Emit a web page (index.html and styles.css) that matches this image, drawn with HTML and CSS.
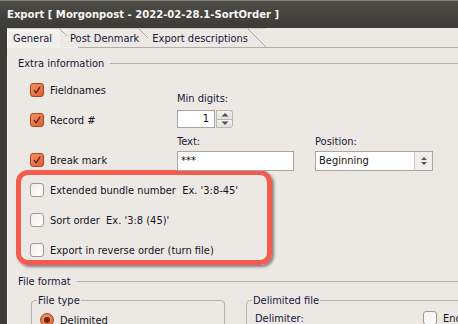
FILE: index.html
```html
<!DOCTYPE html>
<html lang="en">
<head>
    <meta charset="UTF-8">
    <meta name="viewport" content="width=device-width, initial-scale=1.0">
    <title>Export</title>
    <link rel="stylesheet" href="styles.css">
</head>
<body>

    <div class="titlebar">Export [ Morgonpost - 2022-02-28.1-SortOrder ]</div>

    <div class="frame">
        <div class="edge"></div>
        <div class="page">
            <div class="tabs">
                <div class="tab active">General</div>
                <div class="tab">Post Denmark</div>
                <div class="tab last">Export descriptions</div>
            </div>

            <div class="panel">
                <div class="group-title">Extra information</div>

                <div class="extra">
                    <div class="checks">
                        <div class="check">
                            <span class="cb on"><svg viewBox="0 0 12 12"><path d="M3 6.2l2 2.6 4-5.6"/></svg></span>
                            Fieldnames
                        </div>
                        <div class="check record">
                            <span class="cb on"><svg viewBox="0 0 12 12"><path d="M3 6.2l2 2.6 4-5.6"/></svg></span>
                            Record #
                        </div>
                        <div class="check breakmark">
                            <span class="cb on"><svg viewBox="0 0 12 12"><path d="M3 6.2l2 2.6 4-5.6"/></svg></span>
                            Break mark
                        </div>
                    </div>

                    <div class="fields">
                        <div class="lbl digits">Min digits:</div>
                        <div class="spin">
                            <div class="spin-value">1</div>
                            <div class="spin-btns">
                                <div class="spin-btn"><svg viewBox="0 0 8 5"><path d="M0.5 4.5L4 1l3.5 3.5z"/></svg></div>
                                <div class="spin-btn"><svg viewBox="0 0 8 5"><path d="M0.5 0.5L4 4l3.5-3.5z"/></svg></div>
                            </div>
                        </div>
                        <div class="lbl text-lbl">Text:</div>
                        <div class="lbl text-lbl">Position:</div>
                        <div class="input">***</div>
                        <div class="select">
                            <div class="select-value">Beginning</div>
                            <div class="select-btn"><svg viewBox="0 0 8 12"><path d="M1 5L4 2l3 3z M1 7l3 3 3-3z"/></svg></div>
                        </div>
                    </div>
                </div>

                <div class="highlight">
                    <div class="check"><span class="cb"></span>Extended bundle number&nbsp; Ex. '3:8-45'</div>
                    <div class="check"><span class="cb"></span>Sort order&nbsp; Ex. '3:8 (45)'</div>
                    <div class="check"><span class="cb"></span>Export in reverse order (turn file)</div>
                </div>

                <div class="group-title format">File format</div>

                <div class="subgroups">
                    <fieldset class="box box-type">
                        <legend>File type</legend>
                        <div class="check radio-row"><span class="radio"></span>Delimited</div>
                    </fieldset>
                    <fieldset class="box box-delim">
                        <legend>Delimited file</legend>
                        <div class="delim-row">
                            <div class="lbl delim-lbl">Delimiter:</div>
                            <div class="check"><span class="cb"></span>Enclose</div>
                        </div>
                    </fieldset>
                </div>
            </div>
        </div>
    </div>

</body>
</html>
```
FILE: styles.css
```css
body {
    margin: 0;
    width: 458px;
    height: 324px;
    overflow: hidden;
    background: #ece9e4;
    font-family: "DejaVu Sans Condensed", "DejaVu Sans", sans-serif;
    font-size: 11px;
    color: #16163a;
}
.titlebar {
    height: 27px;
    line-height: 27px;
    padding-left: 7px;
    border-top: 1px solid #85847f;
    background: linear-gradient(#4e4d48, #3b3a36);
    color: #f6f6f4;
    font-weight: bold;
    font-size: 11.2px;
    white-space: nowrap;
}
.frame {
    display: flex;
    height: 296px;
}
.edge {
    width: 7px;
    background: #3c3b37;
}
.page {
    flex: 1;
    min-width: 0;
}

/* tabs */
.tabs {
    display: flex;
    height: 19px;
    border-bottom: 1px solid #b1aea9;
}
.tab {
    position: relative;
    height: 19px;
    line-height: 19px;
    padding: 0 18px 0 4px;
    background: #ece9e4;
    border-top: 1px solid #d3d0cb;
    box-sizing: border-box;
    white-space: nowrap;
}
.tab::after {
    content: "";
    position: absolute;
    right: 0;
    top: 0;
    width: 18px;
    height: 18px;
    background: linear-gradient(to top right, #ece9e4 calc(50% - 0.7px), #a9a6a1 50%, transparent calc(50% + 0.7px));
}
.tab.active {
    height: 20px;
    margin-bottom: -1px;
    padding-left: 5px;
    padding-right: 26px;
    background: #f2f0ec;
    border-left: 1px solid #fbfaf8;
}
.tab + .tab {
    margin-left: -11px;
    padding-left: 3px;
}
.tab.last {
    margin-left: -9px;
    padding-left: 4px;
}

/* panel */
.panel {
    padding-left: 10px;
    border-left: 1px solid #f8f7f5;
}
.group-title {
    display: flex;
    height: 14px;
    line-height: 14px;
    margin-top: 9px;
    white-space: nowrap;
}
.group-title::after {
    content: "";
    flex: 1;
    margin: 6px 0 0 6px;
    border-top: 1px solid #b4b1ac;
}
.group-title.format {
    margin-top: 10px;
}

.extra {
    display: flex;
    margin-top: 12px;
    margin-left: 12px;
}
.checks {
    width: 147px;
}
.check {
    display: flex;
    align-items: center;
    gap: 6px;
    height: 14px;
    white-space: nowrap;
    color: #141424;
}
.check.record {
    margin-top: 16px;
}
.check.breakmark {
    margin-top: 26px;
}
.cb {
    width: 14px;
    height: 14px;
    flex: none;
    box-sizing: border-box;
    border: 1px solid #9d9a94;
    border-radius: 3px;
    background: linear-gradient(135deg, #f1f0ee, #ffffff);
}
.cb.on {
    border-color: #a8451e;
    background: linear-gradient(135deg, #f39366, #dc5d2f);
}
.cb svg {
    display: block;
    width: 12px;
    height: 12px;
}
.cb svg path {
    fill: none;
    stroke: #5a2410;
    stroke-width: 1.3;
}

/* fields grid */
.fields {
    display: grid;
    grid-template-columns: 138px 118px;
    align-content: start;
}
.lbl {
    height: 13px;
    line-height: 13px;
    white-space: nowrap;
}
.digits {
    grid-column: 1 / 3;
    margin-top: 9px;
}
.spin {
    grid-column: 1 / 3;
    display: flex;
    width: 56px;
    height: 18px;
    margin-top: 5px;
}
.spin-value {
    width: 38px;
    box-sizing: border-box;
    border: 1px solid #a9a6a1;
    background: #fff;
    text-align: right;
    padding-right: 5px;
    line-height: 16px;
    color: #111;
}
.spin-btns {
    display: flex;
    flex-direction: column;
    width: 17px;
    margin-left: 1px;
}
.spin-btn {
    flex: 1;
    display: flex;
    align-items: center;
    justify-content: center;
    border: 1px solid #b9b6b1;
    background: linear-gradient(#f3f2ef, #e2e0dc);
}
.spin-btn:first-child {
    border-radius: 0 3px 0 0;
    border-bottom: none;
}
.spin-btn:last-child {
    border-radius: 0 0 3px 0;
}
.spin-btn svg {
    width: 8px;
    height: 5px;
    fill: #4f4f55;
}
.text-lbl {
    margin-top: 7px;
}
.input, .select {
    height: 20px;
    margin-top: 3px;
    box-sizing: border-box;
    border: 1px solid #aaa7a2;
    background: #fff;
    color: #111;
    line-height: 18px;
}
.input {
    width: 117px;
    padding-left: 3px;
}
.select {
    display: flex;
    width: 118px;
}
.select-value {
    flex: 1;
    padding-left: 3px;
}
.select-btn {
    width: 17px;
    display: flex;
    align-items: center;
    justify-content: center;
    border-left: 1px solid #cfccc7;
    background: #efeeeb;
}
.select-btn svg {
    width: 8px;
    height: 12px;
    fill: #55555a;
}

/* highlighted options */
.highlight {
    display: flex;
    flex-direction: column;
    gap: 16px;
    width: 256px;
    box-sizing: border-box;
    margin: -1px 0 0 -2px;
    padding: 8px 0 3px 9px;
    border: 5px solid #f55a4e;
    border-radius: 12px;
    box-shadow: 2px 2px 3px rgba(0, 0, 0, 0.45);
}

/* file format */
.subgroups {
    display: flex;
    gap: 21px;
    margin: 5px 0 0 13px;
}
.box {
    margin: 0;
    padding: 6px 0 10px 8px;
    border: 1px solid #b5b2ad;
    border-radius: 4px;
    min-width: 0;
    flex: none;
    box-sizing: border-box;
}
.box legend {
    padding: 0 1px;
    margin-left: -3px;
    line-height: 13px;
}
.box-type {
    width: 194px;
}
.box-delim {
    width: 240px;
    padding-top: 4px;
}
.radio {
    width: 14px;
    height: 14px;
    flex: none;
    box-sizing: border-box;
    border: 1px solid #a8451e;
    border-radius: 50%;
    background: radial-gradient(circle at 40% 35%, #f59a6e, #dc5d2f);
    display: flex;
    align-items: center;
    justify-content: center;
}
.radio::after {
    content: "";
    width: 6px;
    height: 6px;
    border-radius: 50%;
    background: #6b2610;
}
.delim-row {
    display: flex;
    align-items: center;
}
.delim-lbl {
    width: 168px;
}
```
